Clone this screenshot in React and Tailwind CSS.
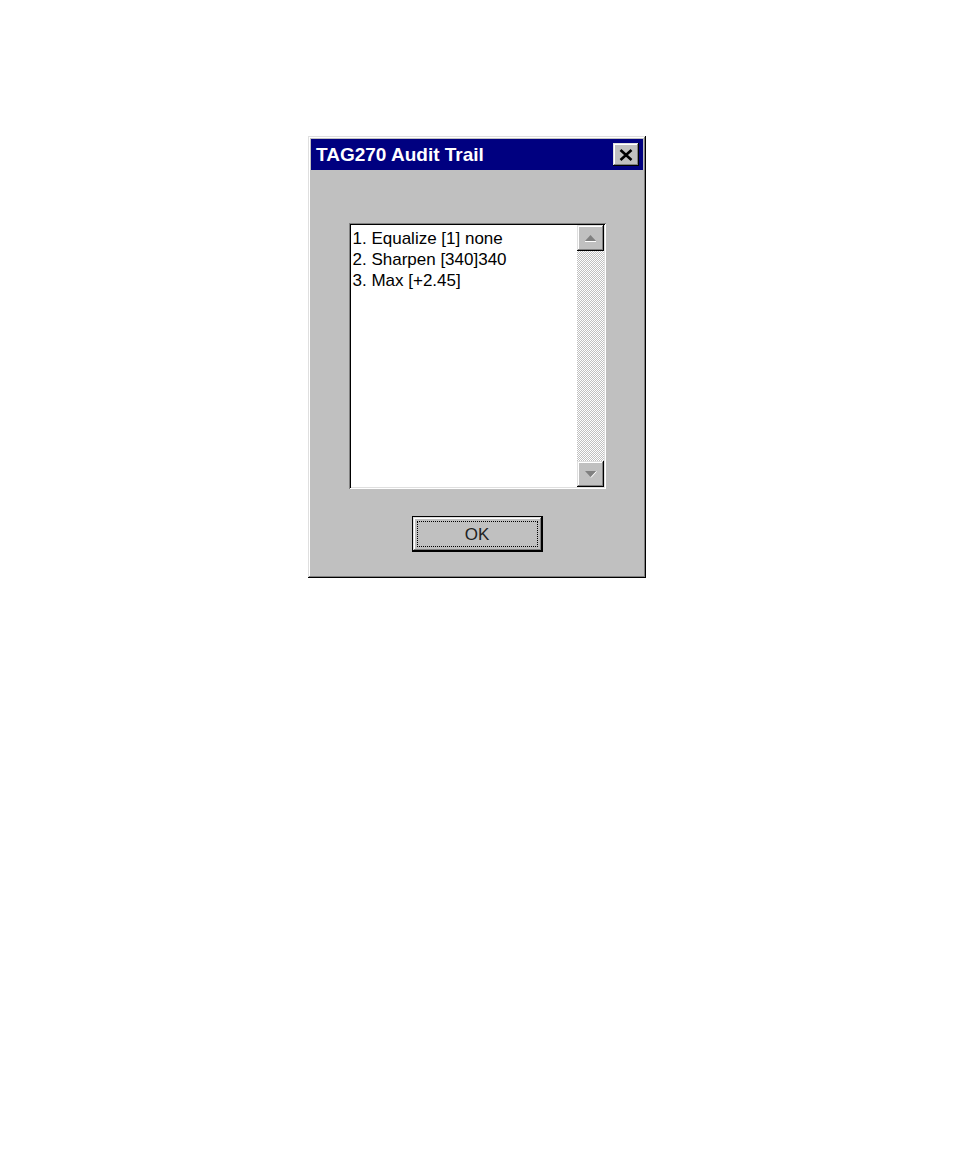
const raised =
  "shadow-[inset_-1px_-1px_#000,inset_1px_1px_#dfdfdf,inset_-2px_-2px_#808080,inset_2px_2px_#fff]";
const sunken =
  "shadow-[inset_1px_1px_#808080,inset_-1px_-1px_#fff,inset_2px_2px_#000,inset_-2px_-2px_#dfdfdf]";

function Arrow({ up }) {
  return (
    <svg width="13" height="8" viewBox="0 0 13 8">
      {up ? (
        <>
          <path d="M1 7.5 L12 7.5" stroke="#fff" strokeWidth="1" />
          <path d="M6.5 1 L12 7 L1 7 Z" fill="#808080" />
        </>
      ) : (
        <>
          <path d="M1 1 L12 1 L6.5 7 Z" fill="#808080" />
          <path d="M7 7.5 L12.5 1.5" stroke="#fff" strokeWidth="1" />
        </>
      )}
    </svg>
  );
}

export default function App() {
  const lines = ["1. Equalize [1] none", "2. Sharpen [340]340", "3. Max [+2.45]"];
  return (
    <div className="min-h-screen bg-white pt-[136px] pl-[308px] font-['Liberation_Sans',Arial,sans-serif]">
      <div className={`w-[338px] h-[442px] bg-[#c0c0c0] p-[3px] flex flex-col ${raised}`}>
        {/* title bar */}
        <div className="h-[31px] bg-[#000080] flex items-center justify-between pl-[5px] pr-[4px]">
          <span className="text-white font-bold text-[19px] leading-none">TAG270 Audit Trail</span>
          <button className={`w-[26px] h-[23px] bg-[#c0c0c0] flex items-center justify-center ${raised}`}>
            <svg width="14" height="12" viewBox="0 0 14 12">
              <path d="M1.5 1 L12.5 11 M12.5 1 L1.5 11" stroke="#000" strokeWidth="2.6" />
            </svg>
          </button>
        </div>

        {/* body */}
        <div className="flex-1 flex flex-col items-center pt-[53px]">
          <div className={`w-[257px] h-[266px] bg-white p-[2px] flex ${sunken}`}>
            <div className="flex-1 pl-[2px] pt-[3px] text-[17px] leading-[21px] text-black">
              {lines.map((l) => (
                <div key={l}>{l}</div>
              ))}
            </div>
            <div className="w-[27px] flex flex-col bg-[repeating-conic-gradient(#c0c0c0_0_25%,#fff_0_50%)] bg-[length:2px_2px]">
              <div className={`h-[26px] bg-[#c0c0c0] flex items-center justify-center ${raised}`}>
                <Arrow up />
              </div>
              <div className="flex-1" />
              <div className={`h-[26px] bg-[#c0c0c0] flex items-center justify-center ${raised}`}>
                <Arrow />
              </div>
            </div>
          </div>

          <button className="mt-[27px] w-[131px] h-[36px] bg-[#c0c0c0] border border-black p-0">
            <div className={`w-full h-full p-[4px] ${raised}`}>
              <div className="w-full h-full border border-dotted border-black flex items-center justify-center text-[17px] text-[#222] leading-none">
                OK
              </div>
            </div>
          </button>
        </div>
      </div>
    </div>
  );
}
